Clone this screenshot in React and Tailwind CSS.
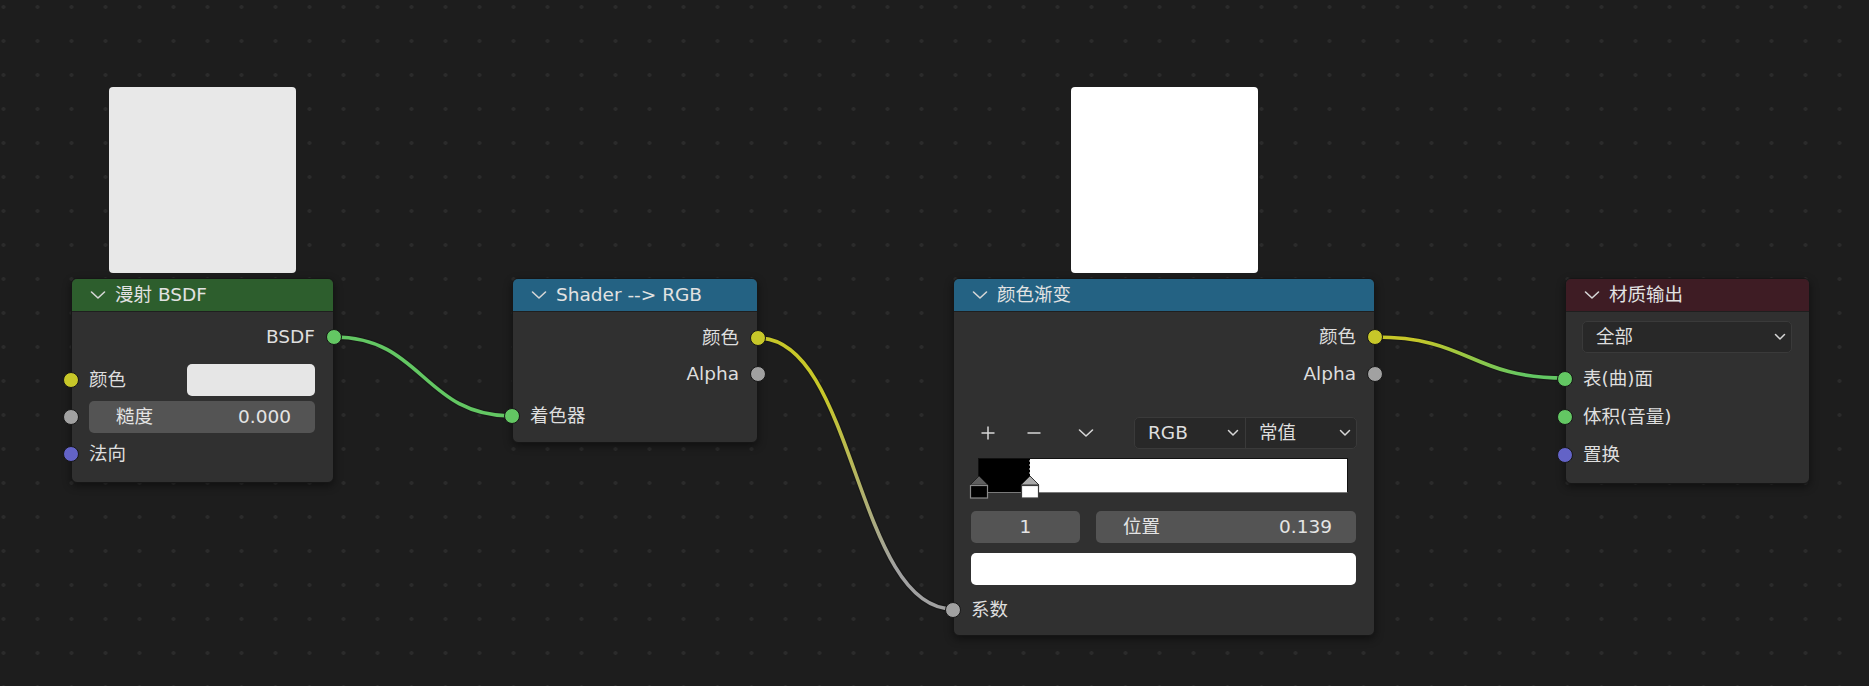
import React from 'react';

const Chevron = ({ className = 'w-[16px] h-[10px]' }) => (
  <svg viewBox="0 0 16 10" className={className} fill="none">
    <polyline points="1.5,2 8,8 14.5,2" stroke="#d6d6d6" strokeWidth="1.6" strokeLinecap="round" strokeLinejoin="round" />
  </svg>
);

const SmallChevron = () => (
  <svg viewBox="0 0 12 8" className="w-[12px] h-[8px]" fill="none">
    <polyline points="1.5,1.5 6,6 10.5,1.5" stroke="#d6d6d6" strokeWidth="1.5" strokeLinecap="round" strokeLinejoin="round" />
  </svg>
);

const Socket = ({ color, side }) => (
  <span
    className={`absolute top-1/2 -translate-y-1/2 w-[16px] h-[16px] rounded-full border border-[#161616] ${
      side === 'left' ? 'left-[-9px]' : 'right-[-9px]'
    } ${color}`}
  />
);

const Row = ({ children, className = '' }) => (
  <div className={`relative h-[32px] flex items-center pl-[17px] pr-[18px] ${className}`}>{children}</div>
);

const Node = ({ title, header, width, children }) => (
  <div
    className={`relative ${width} rounded-[6px] bg-[#303030] border border-[#161616] shadow-[0_3px_8px_rgba(0,0,0,0.45)]`}
  >
    <div className={`h-[33px] flex items-center pl-[18px] gap-[9px] rounded-t-[5px] border-b border-[#1f1f1f] ${header}`}>
      <Chevron />
      <span className="text-[18.5px] leading-none text-[#e2e2e2]">{title}</span>
    </div>
    {children}
  </div>
);

const Field = ({ label, value, className = '' }) => (
  <div className={`h-[32px] flex items-center rounded-[5px] bg-[#545454] text-[#e4e4e4] ${className}`}>
    <span className="pl-[27px]">{label}</span>
    <span className="ml-auto pr-[24px]">{value}</span>
  </div>
);

const Wires = () => (
  <svg className="absolute inset-0 w-[1869px] h-[686px]" viewBox="0 0 1869 686" fill="none">
    <defs>
      <linearGradient id="w2" gradientUnits="userSpaceOnUse" x1="758" y1="338" x2="953" y2="609">
        <stop offset="0.25" stopColor="#c7c729" />
        <stop offset="0.8" stopColor="#a1a1a1" />
      </linearGradient>
      <linearGradient id="w3" gradientUnits="userSpaceOnUse" x1="1375" y1="337" x2="1565" y2="378">
        <stop offset="0.2" stopColor="#c7c729" />
        <stop offset="0.8" stopColor="#63c763" />
      </linearGradient>
    </defs>
    <g stroke="#151515" strokeWidth="6" strokeOpacity="0.6">
      <path d="M334 337 C423 337, 423 416, 512 416" />
      <path d="M758 338 C855.5 338, 855.5 609, 953 609" />
      <path d="M1375 337 C1470 337, 1470 378, 1565 378" />
    </g>
    <path d="M334 337 C423 337, 423 416, 512 416" stroke="#63c763" strokeWidth="3.6" />
    <path d="M758 338 C855.5 338, 855.5 609, 953 609" stroke="url(#w2)" strokeWidth="3.6" />
    <path d="M1375 337 C1470 337, 1470 378, 1565 378" stroke="url(#w3)" strokeWidth="3.6" />
  </svg>
);

const ColorRamp = () => (
  <div className="relative h-[40px] mx-[18px] mt-[9px]">
    <div className="absolute left-[6px] right-[8px] top-0 h-[35px] flex border border-[#111] border-b-[#7a7a7a]">
      <div className="w-[51px] bg-black" />
      <div className="flex-1 bg-white" />
    </div>
    <svg className="absolute left-[-3px] top-0 w-[80px] h-[41px]" viewBox="0 0 80 41" fill="none">
      <line x1="60.5" y1="1" x2="60.5" y2="20" stroke="#000" strokeWidth="1" strokeDasharray="2 2" />
      <line x1="60.5" y1="2" x2="60.5" y2="20" stroke="#fff" strokeWidth="1" strokeDasharray="2 2" opacity="0.5" />
      <polygon points="1,27 10,18 19,27" fill="#5e5e5e" stroke="#222" strokeWidth="1" />
      <rect x="1.5" y="27.5" width="17" height="12.5" fill="#000" stroke="#8a8a8a" strokeWidth="1.2" />
      <polygon points="52,27 61,18 70,27" fill="#a9a9a9" stroke="#333" strokeWidth="1" />
      <rect x="52.5" y="27.5" width="17" height="12.5" fill="#fff" stroke="#3a3a3a" strokeWidth="1.2" />
    </svg>
  </div>
);

const PlusIcon = () => (
  <svg viewBox="0 0 16 16" className="w-[16px] h-[16px]" fill="none">
    <path d="M8 1.5 V14.5 M1.5 8 H14.5" stroke="#d6d6d6" strokeWidth="1.5" />
  </svg>
);

const MinusIcon = () => (
  <svg viewBox="0 0 16 16" className="w-[16px] h-[16px]" fill="none">
    <path d="M1.5 8 H14.5" stroke="#d6d6d6" strokeWidth="1.5" />
  </svg>
);

export default function App() {
  return (
    <div className="relative w-[1869px] h-[686px] overflow-hidden bg-[#1d1d1d] bg-[radial-gradient(circle,#2b2b2b_1.6px,transparent_2.2px)] bg-[length:34px_34px] bg-[position:-13.5px_-10px] text-[18.5px] leading-none text-[#dedede] [font-family:'DejaVu_Sans','Noto_Sans_CJK_SC',sans-serif]">
      <Wires />

      {/* 漫射 BSDF */}
      <div className="absolute left-[71px] top-[87px] flex flex-col items-center gap-[5px]">
        <div className="w-[187px] h-[186px] rounded-[4px] bg-[#e8e8e8]" />
        <Node title="漫射 BSDF" header="bg-[#2d5e2d]" width="w-[263px]">
          <div className="pt-[9px] pb-[12px]">
            <Row className="justify-end">
              <span>BSDF</span>
              <Socket side="right" color="bg-[#63c763]" />
            </Row>
            <Row className="mt-[11px]">
              <Socket side="left" color="bg-[#c7c729]" />
              <span>颜色</span>
              <div className="ml-auto w-[128px] h-[32px] rounded-[5px] bg-[#e6e6e6]" />
            </Row>
            <Row className="mt-[5px]">
              <Socket side="left" color="bg-[#a1a1a1]" />
              <Field label="糙度" value="0.000" className="flex-1" />
            </Row>
            <Row className="mt-[5px]">
              <Socket side="left" color="bg-[#6363c7]" />
              <span>法向</span>
            </Row>
          </div>
        </Node>
      </div>

      {/* Shader --> RGB */}
      <div className="absolute left-[512px] top-[278px]">
        <Node title="Shader --> RGB" header="bg-[#246283]" width="w-[246px]">
          <div className="pt-[10px] pb-[10px]">
            <Row className="justify-end">
              <span>颜色</span>
              <Socket side="right" color="bg-[#c7c729]" />
            </Row>
            <Row className="justify-end mt-[4px]">
              <span>Alpha</span>
              <Socket side="right" color="bg-[#a1a1a1]" />
            </Row>
            <Row className="mt-[10px]">
              <Socket side="left" color="bg-[#63c763]" />
              <span>着色器</span>
            </Row>
          </div>
        </Node>
      </div>

      {/* 颜色渐变 */}
      <div className="absolute left-[953px] top-[87px] flex flex-col items-center gap-[5px]">
        <div className="w-[187px] h-[186px] rounded-[4px] bg-white" />
        <Node title="颜色渐变" header="bg-[#246283]" width="w-[422px]">
          <div className="pt-[9px] pb-[9px]">
            <Row className="justify-end">
              <span>颜色</span>
              <Socket side="right" color="bg-[#c7c729]" />
            </Row>
            <Row className="justify-end mt-[5px]">
              <span>Alpha</span>
              <Socket side="right" color="bg-[#a1a1a1]" />
            </Row>
            <div className="mt-[27px] h-[32px] flex items-center px-[17px]">
              <span className="w-[34px] flex justify-center"><PlusIcon /></span>
              <span className="w-[34px] ml-[12px] flex justify-center"><MinusIcon /></span>
              <span className="w-[34px] ml-[18px] flex justify-center"><Chevron /></span>
              <div className="ml-auto w-[223px] h-[32px] flex rounded-[5px] border border-[#3a3a3a] bg-[#282828]">
                <div className="w-[111px] flex items-center pl-[13px] pr-[6px] border-r border-[#3a3a3a]">
                  <span>RGB</span>
                  <span className="ml-auto flex"><SmallChevron /></span>
                </div>
                <div className="flex-1 flex items-center pl-[13px] pr-[5px]">
                  <span>常值</span>
                  <span className="ml-auto flex"><SmallChevron /></span>
                </div>
              </div>
            </div>
            <ColorRamp />
            <div className="mt-[13px] h-[32px] flex gap-[16px] pl-[17px] pr-[18px]">
              <div className="w-[109px] h-[32px] flex items-center justify-center rounded-[5px] bg-[#545454] text-[#e4e4e4]">1</div>
              <Field label="位置" value="0.139" className="flex-1" />
            </div>
            <div className="mt-[10px] pl-[17px] pr-[18px]">
              <div className="h-[32px] rounded-[5px] bg-white" />
            </div>
            <Row className="mt-[9px]">
              <Socket side="left" color="bg-[#a1a1a1]" />
              <span>系数</span>
            </Row>
          </div>
        </Node>
      </div>

      {/* 材质输出 */}
      <div className="absolute left-[1565px] top-[278px]">
        <Node title="材质输出" header="bg-[#3e1c24]" width="w-[245px]">
          <div className="pt-[9px] pb-[12px]">
            <div className="pl-[16px] pr-[17px]">
              <div className="h-[32px] flex items-center pl-[13px] pr-[5px] rounded-[5px] border border-[#3a3a3a] bg-[#282828]">
                <span>全部</span>
                <span className="ml-auto flex"><SmallChevron /></span>
              </div>
            </div>
            <Row className="mt-[10px]">
              <Socket side="left" color="bg-[#63c763]" />
              <span>表(曲)面</span>
            </Row>
            <Row className="mt-[6px]">
              <Socket side="left" color="bg-[#63c763]" />
              <span>体积(音量)</span>
            </Row>
            <Row className="mt-[6px]">
              <Socket side="left" color="bg-[#6363c7]" />
              <span>置换</span>
            </Row>
          </div>
        </Node>
      </div>
    </div>
  );
}
